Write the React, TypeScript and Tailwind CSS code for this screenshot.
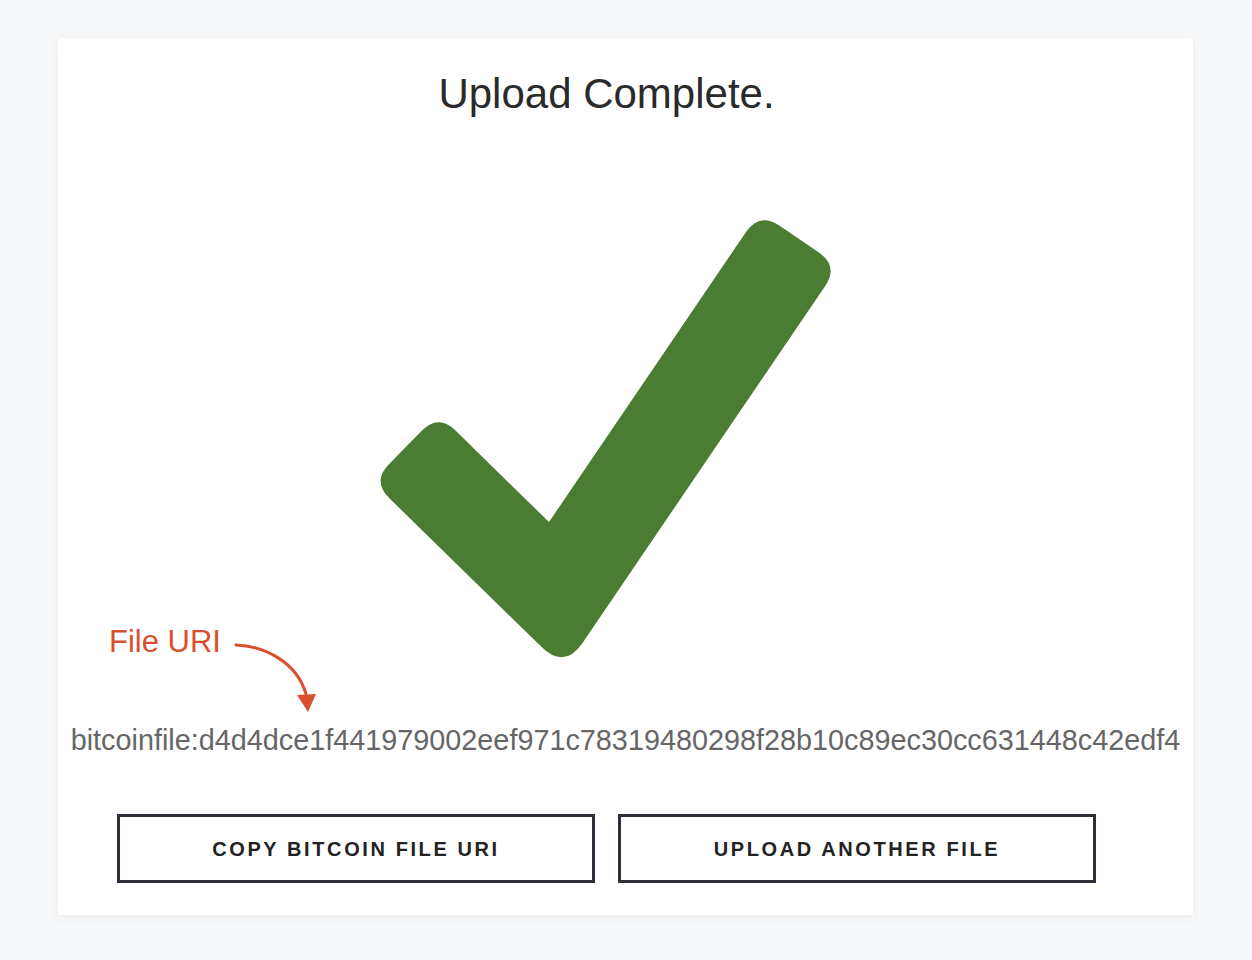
const URI =
  "bitcoinfile:d4d4dce1f441979002eef971c78319480298f28b10c89ec30cc631448c42edf4";

function CheckMark() {
  return (
    <svg
      width="470"
      height="470"
      viewBox="371 205 470 470"
      className="block"
      aria-hidden="true"
    >
      <path
        d="M454.5 430.6 L548 522 L745 232 Q758.5 212.1 778.3 225.6 L817.9 252.6 Q837.7 266.1 824.2 285.9 L581.5 643 Q563.5 669.5 540.6 647.1 L388.3 498.2 Q371.1 481.4 387.9 464.2 L420.5 431 Q437.3 413.8 454.5 430.6 Z"
        fill="#4a7c31"
      />
    </svg>
  );
}

function UriArrow() {
  return (
    <svg
      width="90"
      height="80"
      viewBox="230 638 90 80"
      className="absolute left-[172px] top-[600px]"
      aria-hidden="true"
    >
      <path
        d="M236 645 C262 646 296 660 306 694"
        fill="none"
        stroke="#d9502e"
        strokeWidth="3"
        strokeLinecap="round"
      />
      <path d="M297 695 L316 694 L308 712 Z" fill="#d9502e" />
    </svg>
  );
}

export default function App() {
  return (
    <div className="min-h-[960px] bg-[#f7f8fa] pt-[38px] font-['Liberation_Sans',Arial,sans-serif]">
      <div className="relative ml-[58px] w-[1135px] h-[877px] bg-white shadow-[0_3px_10px_rgba(0,0,0,0.05)] pt-[32px] flex flex-col">
        {/* annotation */}
        <div className="absolute left-[51px] top-[586px] text-[31px] leading-[36px] text-[#d9502e]">
          File URI
        </div>
        <UriArrow />

        <div className="ml-[59px] w-[979px] flex flex-col items-center">
          <h1 className="text-[42px] leading-[48px] font-normal text-[#2a2a2a]">
            Upload Complete.
          </h1>
          <div className="mt-[87px]">
            <CheckMark />
          </div>
        </div>

        <div className="mt-[47px] text-center text-[28.8px] leading-[36px] text-[#666] whitespace-nowrap">
          {URI}
        </div>

        <div className="mt-[56px] ml-[59px] w-[979px] flex gap-[23px]">
          <button className="w-[478px] h-[69px] border-[3px] border-[#2e2e3a] bg-white text-[20px] font-bold tracking-[2.6px] text-[#222]">
            COPY BITCOIN FILE URI
          </button>
          <button className="w-[478px] h-[69px] border-[3px] border-[#2e2e3a] bg-white text-[20px] font-bold tracking-[2.6px] text-[#222]">
            UPLOAD ANOTHER FILE
          </button>
        </div>
      </div>
    </div>
  );
}
